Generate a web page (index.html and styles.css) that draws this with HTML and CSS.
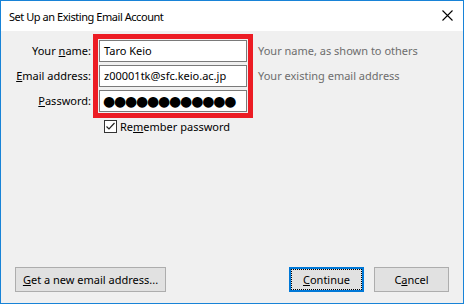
FILE: index.html
```html
<!DOCTYPE html>
<html lang="en">
<head>
  <meta charset="UTF-8">
  <title>Set Up an Existing Email Account</title>
  <link rel="stylesheet" href="styles.css">
</head>
<body>
  <div class="janela">
    <div class="barra-titulo">
      <span class="titulo">Set Up an Existing Email Account</span>
      <svg class="fechar" width="11" height="11" viewBox="0 0 11 11">
        <path d="M0.5 0.5 L10.5 10.5 M10.5 0.5 L0.5 10.5" stroke="#000" stroke-width="1.1" fill="none"/>
      </svg>
    </div>

    <div class="conteudo">
      <div class="formulario">
        <div class="rotulos">
          <label>Your <u>n</u>ame:</label>
          <label><u>E</u>mail address:</label>
          <label><u>P</u>assword:</label>
        </div>

        <div class="destaque">
          <div class="campo">Taro Keio</div>
          <div class="campo">z00001tk@sfc.keio.ac.jp</div>
          <div class="campo senha">●●●●●●●●●●●●</div>
        </div>

        <div class="dicas">
          <span>Your name, as shown to others</span>
          <span>Your existing email address</span>
          <span></span>
        </div>
      </div>

      <div class="lembrar">
        <svg class="caixa" width="13" height="13" viewBox="0 0 13 13">
          <rect x="0.5" y="0.5" width="12" height="12" fill="#fff" stroke="#333"/>
          <path d="M2.5 6.5 L5 9 L10.5 3" stroke="#222" stroke-width="1.2" fill="none"/>
        </svg>
        <span>Re<u>m</u>ember password</span>
      </div>

      <div class="botoes">
        <button class="botao largo"><u>G</u>et a new email address...</button>
        <div class="botoes-direita">
          <button class="botao foco"><u>C</u>ontinue</button>
          <button class="botao">C<u>a</u>ncel</button>
        </div>
      </div>
    </div>
  </div>
</body>
</html>
```

FILE: styles.css
```css
body {
  margin: 0;
  font-family: 'Noto Sans', 'Open Sans', sans-serif;
  font-size: 11px;
  color: #000;
}

.janela {
  width: 464px;
  height: 304px;
  border: 1px solid #1883d7;
  box-sizing: border-box;
  display: flex;
  flex-direction: column;
  background: #f0f0f0;
}

.barra-titulo {
  height: 30px;
  background: white;
  display: flex;
  align-items: center;
  justify-content: space-between;
  padding: 0 10px 0 8px;
}

.titulo {
  font-size: 11px;
  letter-spacing: -0.45px;
}

.fechar {
  margin-top: -1px;
}

.conteudo {
  flex: 1;
  display: flex;
  flex-direction: column;
  padding: 3px 14px 11px 0;
}

.formulario {
  display: flex;
  gap: 2px;
}

.rotulos,
.dicas {
  display: flex;
  flex-direction: column;
  gap: 3px;
  padding-top: 6px;
}

.rotulos {
  width: 90px;
  text-align: right;
}

.rotulos label,
.dicas span {
  height: 22px;
  line-height: 22px;
  white-space: nowrap;
}

.dicas {
  margin-left: 3px;
  color: #6d6d6d;
}

.destaque {
  border: 5px solid #ec1c24;
  padding: 1px;
  display: flex;
  flex-direction: column;
  gap: 3px;
}

.campo {
  width: 148px;
  height: 22px;
  box-sizing: border-box;
  border: 1px solid #7a7a7a;
  background: white;
  padding: 0 4px;
  line-height: 20px;
  white-space: nowrap;
  overflow: hidden;
}

.senha {
  font-family: 'DejaVu Sans', sans-serif;
  font-size: 14px;
  letter-spacing: -1.2px;
  padding-left: 3px;
}

.lembrar {
  display: flex;
  align-items: center;
  gap: 3px;
  margin: 1px 0 0 103px;
  height: 14px;
}

.botoes {
  margin-top: auto;
  display: flex;
  justify-content: space-between;
  padding-left: 14px;
}

.botoes-direita {
  display: flex;
  gap: 10px;
}

.botao {
  font-family: inherit;
  font-size: 11px;
  height: 25px;
  width: 75px;
  background: #e1e1e1;
  border: 1px solid #adadad;
  padding: 0;
  color: #000;
}

.botao.largo {
  width: 151px;
}

.botao.foco {
  border-color: #0078d7;
  box-shadow: inset 0 0 0 1px #0078d7;
  outline: 1px dotted #000;
  outline-offset: -3px;
}
```
